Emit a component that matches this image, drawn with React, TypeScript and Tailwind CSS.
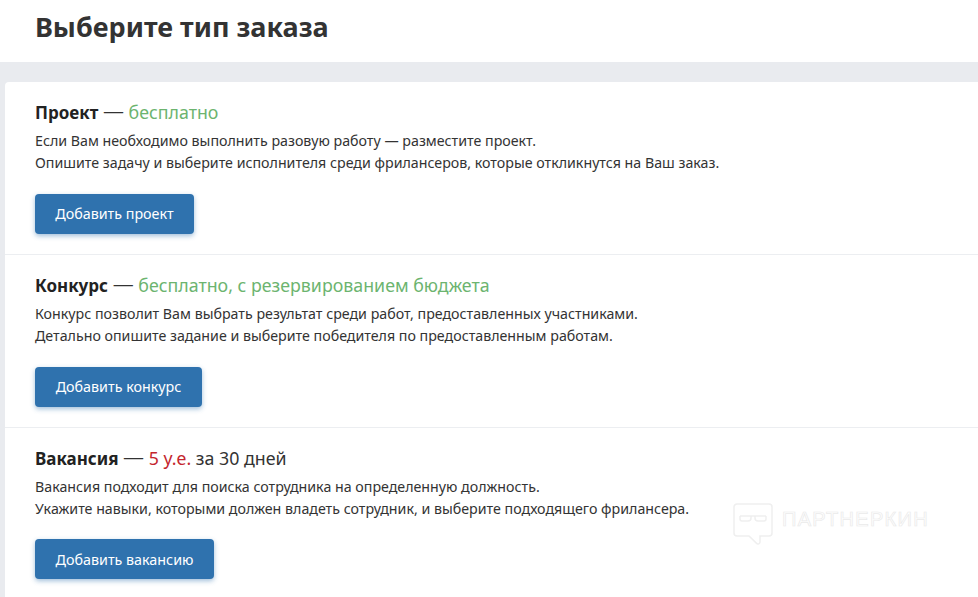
const sections = [
  {
    name: 'Проект',
    price: <span className="text-[#6cb46f]">бесплатно</span>,
    lines: [
      'Если Вам необходимо выполнить разовую работу — разместите проект.',
      'Опишите задачу и выберите исполнителя среди фрилансеров, которые откликнутся на Ваш заказ.',
    ],
    button: 'Добавить проект',
    buttonWidth: 'w-[159px]',
  },
  {
    name: 'Конкурс',
    price: <span className="text-[#6cb46f]">бесплатно, с резервированием бюджета</span>,
    lines: [
      'Конкурс позволит Вам выбрать результат среди работ, предоставленных участниками.',
      'Детально опишите задание и выберите победителя по предоставленным работам.',
    ],
    button: 'Добавить конкурс',
    buttonWidth: 'w-[167px]',
  },
  {
    name: 'Вакансия',
    price: (
      <>
        <span className="text-[#c4262e]">5 у.е.</span> за 30 дней
      </>
    ),
    lines: [
      'Вакансия подходит для поиска сотрудника на определенную должность.',
      'Укажите навыки, которыми должен владеть сотрудник, и выберите подходящего фрилансера.',
    ],
    button: 'Добавить вакансию',
    buttonWidth: 'w-[179px]',
  },
]

function Watermark() {
  return (
    <div className="absolute left-[733px] top-[503px] flex items-start gap-[9px]">
      <svg width="40" height="44" viewBox="0 0 40 44" fill="none" stroke="#efefef" strokeWidth="1.5">
        <path d="M4 1h32a3 3 0 0 1 3 3v26a3 3 0 0 1-3 3H27v6a2 2 0 0 1-3.4 1.4L16 33H4a3 3 0 0 1-3-3V4a3 3 0 0 1 3-3z" />
        <path d="M7 13h26M7 13v3a2 2 0 0 0 2 2h6a3 3 0 0 0 3-3v-2M22 13v2a3 3 0 0 0 3 3h6a2 2 0 0 0 2-2v-3" />
      </svg>
      <span className="mt-[6px] text-[20px] leading-[20px] tracking-[1.3px] text-transparent font-['Liberation_Sans',sans-serif] [-webkit-text-stroke:0.7px_#eaeaea]">
        ПАРТНЕРКИН
      </span>
    </div>
  )
}

export default function App() {
  return (
    <div className="relative h-[597px] w-[978px] overflow-hidden bg-[#e9ebef] font-['Noto_Sans',sans-serif] text-[#333]">
      <header className="h-[62px] bg-white pl-[35px] pt-[8px]">
        <h1 className="text-[27px] font-bold leading-[38px] text-[#333]">Выберите тип заказа</h1>
      </header>
      <main className="ml-[5px] mt-[20px] rounded-tl-[4px] bg-white">
        {sections.map((section) => (
          <section key={section.name} className="h-[172.8px] border-b border-[#eceef1] pl-[30px] pt-[18px]">
            <h2 className="h-[24px] text-[17.8px] leading-[24px]">
              <b className="text-[17px] font-bold text-[#222]">{section.name}</b>{' '}
              <span className="text-[21px] font-light leading-none">—</span> {section.price}
            </h2>
            <p className="mt-[6px] text-[14.22px] leading-[22px]">
              {section.lines[0]}
              <br />
              {section.lines[1]}
            </p>
            <button
              type="button"
              className={`mt-[19.75px] h-[40px] rounded-[4px] bg-[#2f72ae] text-[14.3px] text-white shadow-[0_2px_5px_rgba(47,114,174,0.45)] ${section.buttonWidth}`}
            >
              {section.button}
            </button>
          </section>
        ))}
      </main>
      <Watermark />
    </div>
  )
}
